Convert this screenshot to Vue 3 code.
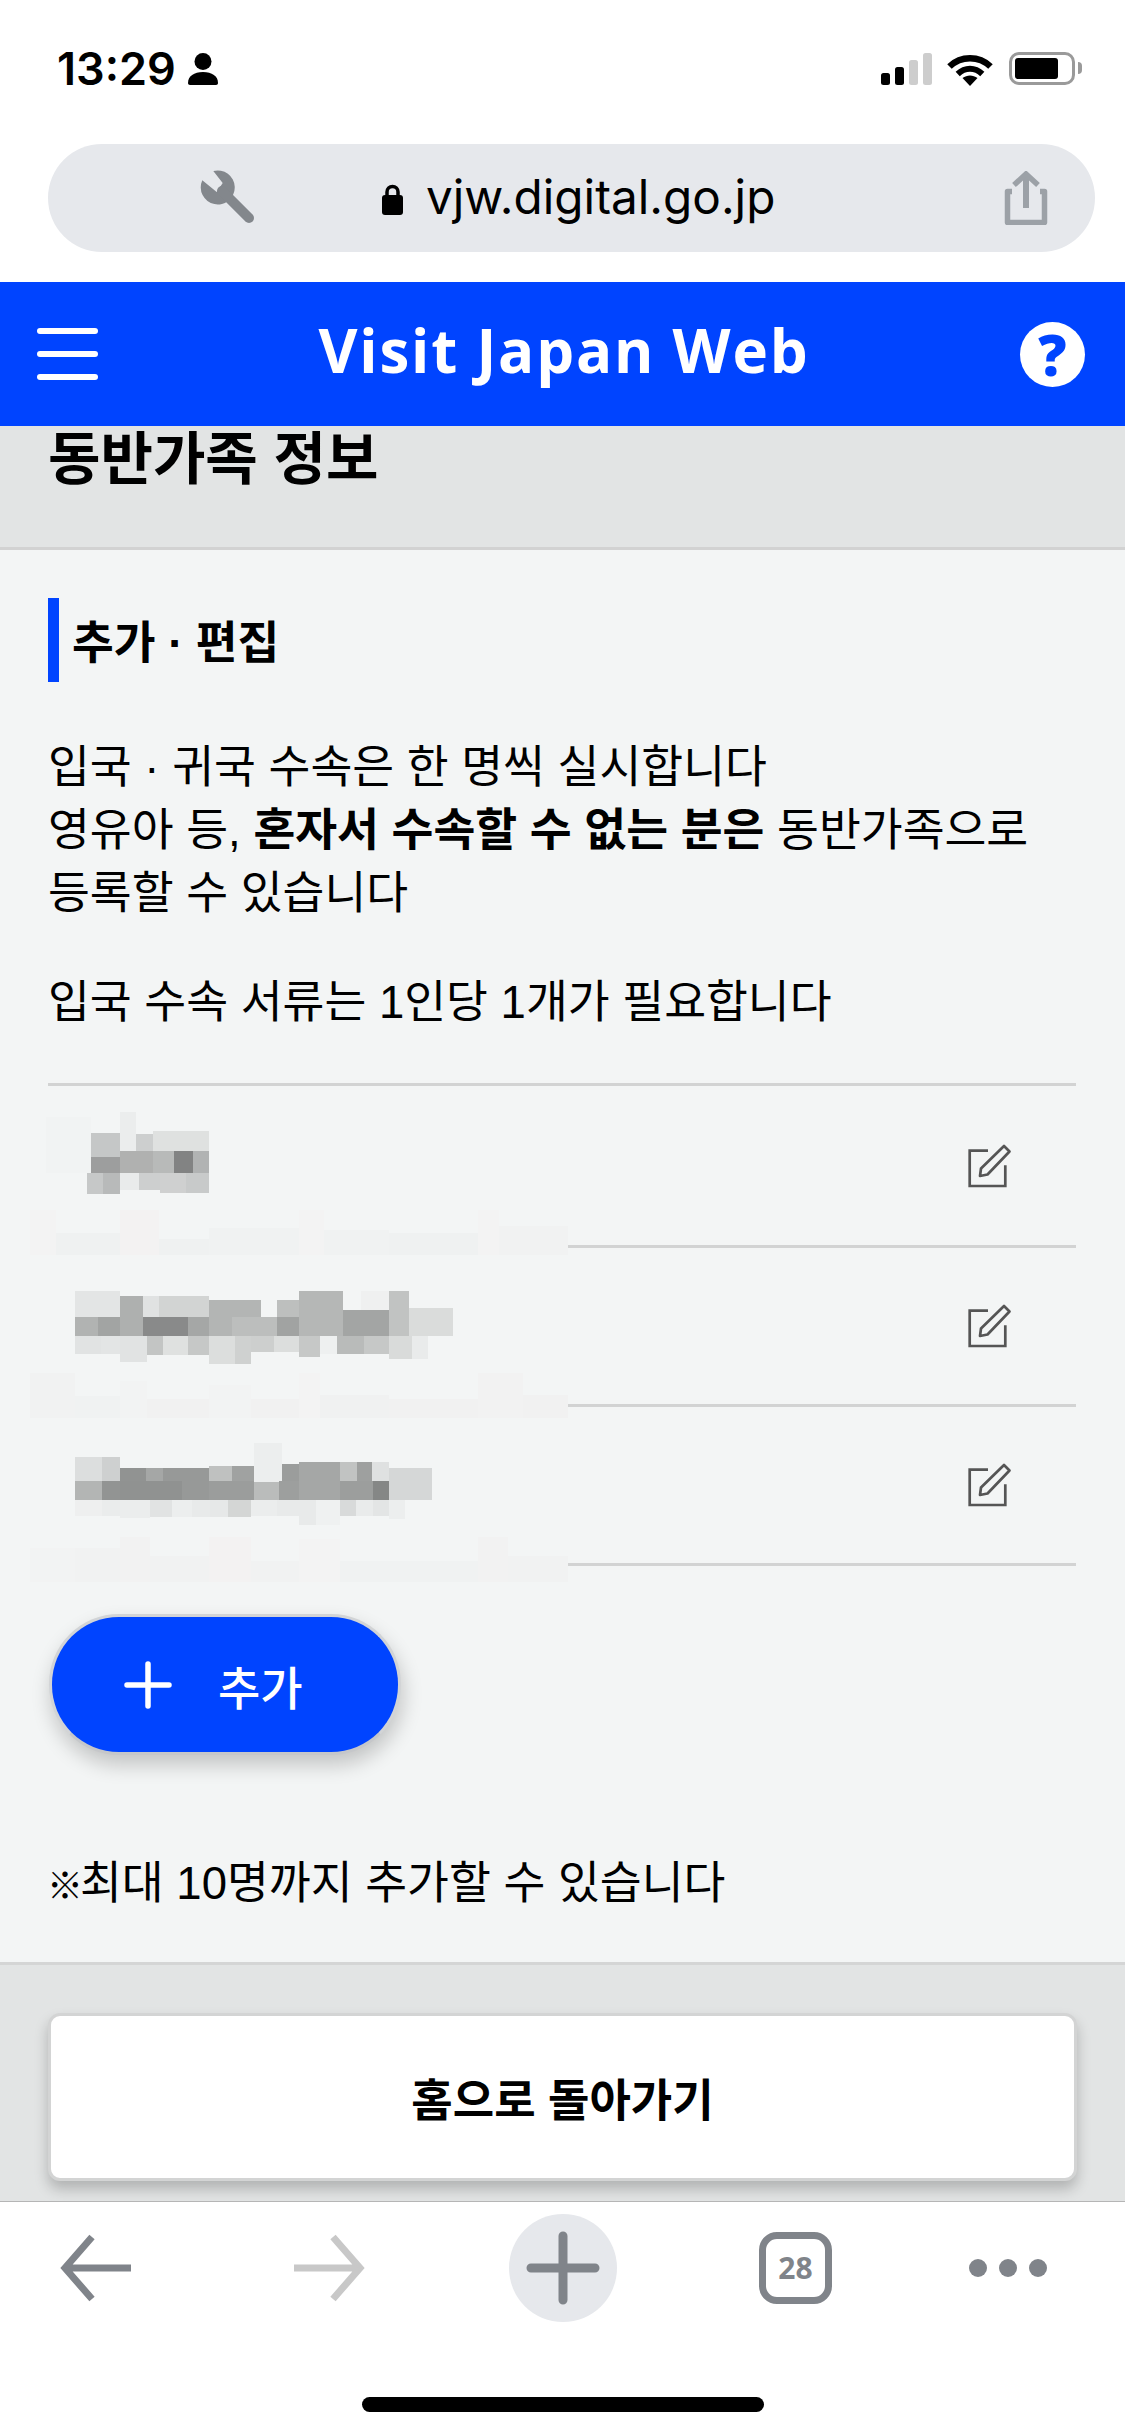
<template>
  <div class="phone">
    <div class="statusbar">
      <div class="status-left">
        <span class="time">13:29</span>
        <svg class="person" width="30" height="32" viewBox="0 0 30 32">
          <circle cx="15" cy="8.5" r="8.5" fill="#000" />
          <path d="M0 30c0-7 6-11 15-11s15 4 15 11c0 1.200-.8 2-2 2H2c-1.200 0-2-.8-2-2z" fill="#000" />
        </svg>
      </div>
      <div class="status-right">
        <div class="signal">
          <span v-for="bar in signalBars" :key="bar.h" class="sig-bar" :class="{ off: bar.off }" :style="{ height: bar.h + 'px' }"></span>
        </div>
        <svg class="wifi" width="46" height="34" viewBox="0 0 46 34">
          <path d="M2.500 14.500C14 3.500 32 3.500 43.500 14.500" fill="none" stroke="#000" stroke-width="6.500" />
          <path d="M10.700 22C18 15 28 15 35.300 22" fill="none" stroke="#000" stroke-width="6" />
          <path d="M15.500 26C20 22.500 26 22.500 30.500 26L23 34z" fill="#000" />
        </svg>
        <div class="battery">
          <div class="battery-fill"></div>
          <span class="battery-nub"></span>
        </div>
      </div>
    </div>

    <div class="urlrow">
      <div class="urlbar">
        <svg class="wrench" width="60" height="60" viewBox="200 160 60 60">
          <path d="M202.300 173.300L216.700 185L222.700 176L213.300 164A17 17 0 1 1 202.300 173.300z" fill="#83878c" />
          <path d="M222 184L249 211" stroke="#83878c" stroke-width="10" stroke-linecap="round" />
        </svg>
        <div class="address">
          <svg width="21" height="32" viewBox="0 0 21 32">
            <path d="M5 14V9a5.500 5.500 0 0 1 11 0v5" fill="none" stroke="#000" stroke-width="3.500" />
            <rect x="0" y="12" width="21" height="20" rx="3" fill="#000" />
          </svg>
          <span>vjw.digital.go.jp</span>
        </div>
        <svg class="share" width="44" height="54" viewBox="0 0 44 54">
          <path d="M8 20.500H3.500V51.500H40.500V20.500H36" fill="none" stroke="#9ca1a7" stroke-width="5.500" stroke-linejoin="round" />
          <path d="M22 4V37" stroke="#9ca1a7" stroke-width="6" />
          <path d="M10 14L22 3L34 14" fill="none" stroke="#9ca1a7" stroke-width="5.500" />
        </svg>
      </div>
    </div>

    <header class="app-header">
      <div class="hamburger">
        <span></span>
        <span></span>
        <span></span>
      </div>
      <div class="app-title">Visit Japan Web</div>
      <div class="help">?</div>
    </header>

    <div class="page-title">동반가족 정보</div>

    <main class="main">
      <h2 class="sub-title">추가 · 편집</h2>
      <p class="desc first">
        입국 · 귀국 수속은 한 명씩 실시합니다<br />
        영유아 등, <b>혼자서 수속할 수 없는 분은</b> 동반가족으로<br />
        등록할 수 있습니다
      </p>
      <p class="desc second">입국 수속 서류는 1인당 1개가 필요합니다</p>

      <div class="family-list">
        <div v-for="n in 3" :key="n" class="family-row">
          <svg class="edit" width="44" height="44" viewBox="0 0 44 44">
            <path d="M20 6.700H1.700V42H37.300V21.300" fill="none" stroke="#555" stroke-width="2.700" />
            <path d="M12 32L13 24.500L36 2L41.500 7.500L19.500 30.500z" fill="none" stroke="#555" stroke-width="2.700" stroke-linejoin="round" />
          </svg>
        </div>
        <!-- pixelated names, coords from a 1568x1568 grid over the region -->
        <svg class="mosaic" width="1125" height="560" viewBox="0 0 1568 1568" preserveAspectRatio="none" shape-rendering="crispEdges">
          <rect v-for="(r, i) in mosaic" :key="i" :x="r[0]" :y="r[2]" :width="r[1] - r[0]" :height="r[3] - r[2]" :fill="r[4]" />
        </svg>
      </div>

      <button class="add-btn">
        <svg width="48" height="48" viewBox="0 0 48 48">
          <path d="M3 24H45M24 3V45" stroke="#fff" stroke-width="5.500" stroke-linecap="round" />
        </svg>
        <span>추가</span>
      </button>

      <p class="desc note"><span class="mark">※</span>최대 10명까지 추가할 수 있습니다</p>
    </main>

    <div class="footer">
      <button class="home-btn">홈으로 돌아가기</button>
    </div>

    <nav class="toolbar">
      <div class="tool-icons">
        <svg class="tool-back" width="74" height="68" viewBox="0 0 74 68">
          <path d="M72 34H6M33 3L6 34L33 65" fill="none" stroke="#80848a" stroke-width="7" />
        </svg>
        <svg class="tool-forward" width="74" height="68" viewBox="0 0 74 68">
          <path d="M2 34H68M41 3L68 34L41 65" fill="none" stroke="#c8c8c8" stroke-width="7" />
        </svg>
        <div class="tool-new">
          <svg width="74" height="74" viewBox="0 0 74 74">
            <path d="M5 37H69M37 5V69" stroke="#80848a" stroke-width="9" stroke-linecap="round" />
          </svg>
        </div>
        <div class="tool-tabs">28</div>
        <div class="tool-more">
          <span></span>
          <span></span>
          <span></span>
        </div>
      </div>
      <div class="home-bar"></div>
    </nav>
  </div>
</template>

<script setup>
const signalBars = [
  { h: 12 },
  { h: 18 },
  { h: 25, off: true },
  { h: 32, off: true }
]

// x1, x2, y1, y2, colour
const mosaic = [
  // name 1
  [64, 127, 160, 315, '#f1f3f3'], [167, 190, 145, 255, '#ebeded'], [127, 167, 204, 272, '#c5c7c7'],
  [190, 213, 207, 255, '#cdcfcf'], [213, 291, 198, 255, '#dfe1e0'], [127, 167, 272, 316, '#9d9e9e'],
  [167, 213, 255, 316, '#b0b1b0'], [213, 243, 255, 316, '#b8bab9'], [243, 269, 255, 316, '#828383'],
  [269, 291, 255, 316, '#b1b3b3'], [121, 144, 316, 375, '#c6c8c8'], [144, 167, 316, 375, '#b8baba'],
  [167, 194, 316, 364, '#e9ebeb'], [194, 223, 316, 364, '#cdcfcf'], [223, 259, 316, 372, '#cfd0d0'],
  [259, 291, 316, 372, '#c8caca'],
  // sub line 1
  [42, 78, 420, 545, '#f3f3f3'], [78, 167, 485, 545, '#eff1f1'], [167, 222, 420, 545, '#f3f2f2'],
  [222, 291, 500, 545, '#eff1f1'], [291, 417, 470, 545, '#f0f2f2'], [417, 452, 420, 545, '#f3f3f3'],
  [452, 542, 475, 545, '#f0f2f2'], [542, 666, 485, 545, '#eff1f1'], [666, 695, 420, 545, '#f3f3f3'],
  [695, 792, 465, 545, '#f1f2f2'],
  // name 2
  [105, 167, 647, 720, '#e3e5e5'], [167, 199, 661, 720, '#aeb0af'], [199, 222, 661, 720, '#e0e2e2'],
  [222, 291, 661, 720, '#d2d4d3'], [291, 364, 672, 720, '#b3b5b4'], [386, 417, 672, 720, '#bdbfbe'],
  [417, 478, 647, 773, '#b5b7b6'], [503, 542, 647, 700, '#eff0f0'], [542, 570, 647, 773, '#c1c3c2'],
  [570, 631, 694, 773, '#dadcdb'], [105, 137, 720, 773, '#b1b3b2'], [137, 167, 720, 773, '#a2a4a3'],
  [167, 199, 720, 773, '#aeb0af'], [199, 262, 720, 773, '#898a8a'], [262, 291, 720, 773, '#a5a7a6'],
  [291, 323, 720, 773, '#b3b5b4'], [323, 386, 720, 773, '#bcbebd'], [386, 417, 720, 773, '#a1a3a2'],
  [478, 542, 700, 773, '#a3a5a4'], [105, 141, 773, 823, '#e1e3e3'], [141, 167, 773, 823, '#e3e5e5'],
  [167, 205, 773, 845, '#e1e3e3'], [205, 227, 773, 825, '#c3c5c4'], [227, 262, 773, 825, '#dfe1e0'],
  [262, 291, 773, 825, '#c6c8c7'], [291, 328, 773, 850, '#dcdedd'], [328, 350, 773, 850, '#cfd1d0'],
  [350, 382, 773, 818, '#cdcfce'], [382, 417, 773, 818, '#dcdedd'], [417, 446, 773, 832, '#c6c8c7'],
  [446, 470, 773, 822, '#eef0f0'], [470, 508, 773, 822, '#b9bbba'], [508, 542, 773, 822, '#c6c8c7'],
  [542, 574, 773, 836, '#d9dbda'], [574, 597, 773, 836, '#e9ebeb'],
  // sub line 2
  [42, 105, 877, 1001, '#f1f2f2'], [105, 167, 940, 1001, '#f0f2f2'], [167, 205, 898, 1001, '#f2f3f3'],
  [205, 291, 950, 1001, '#f1f1f1'], [291, 350, 910, 1001, '#f2f3f3'], [350, 417, 950, 1001, '#f1f1f1'],
  [417, 446, 877, 1001, '#f3f3f3'], [446, 542, 937, 1001, '#f0f1f1'], [542, 666, 950, 1001, '#f1f1f1'],
  [666, 729, 877, 1001, '#f2f2f2'], [729, 792, 937, 1001, '#f1f1f1'],
  // name 3
  [105, 142, 1112, 1179, '#dcdede'], [142, 167, 1112, 1179, '#ced0d0'], [167, 203, 1142, 1179, '#919392'],
  [203, 227, 1142, 1179, '#a5a7a6'], [227, 291, 1142, 1179, '#979998'], [291, 323, 1137, 1179, '#bfc1c0'],
  [323, 354, 1137, 1179, '#a0a2a1'], [354, 393, 1072, 1182, '#eceeee'], [393, 417, 1131, 1179, '#9b9d9c'],
  [417, 474, 1126, 1179, '#a5a7a6'], [474, 497, 1126, 1179, '#c1c3c2'], [497, 518, 1126, 1179, '#9ea09f'],
  [518, 542, 1126, 1179, '#dfe1e1'], [542, 602, 1142, 1232, '#d5d7d7'], [105, 142, 1179, 1232, '#b3b5b4'],
  [142, 167, 1179, 1232, '#929493'], [167, 254, 1179, 1232, '#909291'], [254, 291, 1179, 1232, '#979998'],
  [291, 354, 1179, 1232, '#9b9d9c'], [354, 389, 1182, 1232, '#babcbb'], [389, 417, 1179, 1232, '#9d9f9e'],
  [417, 474, 1179, 1232, '#a5a7a6'], [474, 520, 1179, 1232, '#9c9e9d'], [520, 542, 1179, 1232, '#858786'],
  [105, 142, 1232, 1277, '#eeefef'], [142, 167, 1232, 1277, '#eaecec'], [167, 209, 1232, 1282, '#ebeded'],
  [209, 240, 1232, 1280, '#e1e3e3'], [240, 268, 1232, 1280, '#eceeee'], [268, 292, 1232, 1280, '#e8eaea'],
  [292, 318, 1232, 1280, '#e6e8e8'], [318, 350, 1232, 1280, '#d4d6d5'], [350, 386, 1232, 1277, '#ebeded'],
  [386, 417, 1232, 1277, '#e8eaea'], [417, 440, 1232, 1302, '#e8eaea'], [440, 474, 1232, 1302, '#eff1f1'],
  [474, 496, 1232, 1277, '#d8dada'], [496, 520, 1232, 1277, '#e9ebeb'], [520, 542, 1232, 1277, '#e3e5e5'],
  [542, 564, 1232, 1284, '#eceeee'],
  // sub line 3
  [42, 105, 1365, 1462, '#f2f3f3'], [105, 167, 1365, 1462, '#f1f2f2'], [167, 209, 1335, 1462, '#f2f2f2'],
  [209, 291, 1388, 1462, '#f1f2f2'], [291, 350, 1335, 1462, '#f3f2f2'], [350, 417, 1402, 1462, '#f1f2f2'],
  [417, 474, 1340, 1462, '#f3f3f3'], [474, 666, 1402, 1462, '#f0f2f2'], [666, 708, 1335, 1462, '#f2f2f2'],
  [708, 792, 1388, 1462, '#f1f2f2']
]
</script>

<style scoped>
.phone {
  width: 1125px;
  height: 2436px;
  overflow: hidden;
  background: #fff;
  font-family: "Liberation Sans", "Noto Sans CJK KR", sans-serif;
  color: #000;
}

.statusbar {
  height: 144px;
  display: flex;
  justify-content: space-between;
  padding: 52px 50px 0 57px;
  box-sizing: border-box;
}

.status-left {
  display: flex;
  align-items: flex-start;
  height: 34px;
}

.time {
  font-family: Inter, sans-serif;
  font-weight: 600;
  font-size: 45px;
  line-height: 34px;
}

.person {
  margin-left: 12px;
  margin-top: 1px;
}

.status-right {
  display: flex;
  align-items: flex-start;
  height: 34px;
}

.signal {
  display: flex;
  align-items: flex-end;
  gap: 5px;
  height: 33px;
}

.sig-bar {
  width: 9px;
  border-radius: 2.500px;
  background: #000;
}

.sig-bar.off {
  background: #cdcdcd;
}

.wifi {
  margin-left: 15px;
}

.battery {
  position: relative;
  margin-left: 16px;
  width: 66px;
  height: 33px;
  box-sizing: border-box;
  border: 3px solid #9a9a9a;
  border-radius: 10px;
  padding: 3px;
}

.battery-fill {
  width: 43px;
  height: 21px;
  background: #000;
  border-radius: 3px;
}

.battery-nub {
  position: absolute;
  left: 66px;
  top: 7px;
  width: 4px;
  height: 12px;
  background: #9a9a9a;
  border-radius: 0 4px 4px 0;
}

.urlrow {
  height: 138px;
  padding: 0 30px 0 48px;
}

.urlbar {
  height: 108px;
  background: #e6e8ec;
  border-radius: 54px;
  display: flex;
  align-items: center;
}

.wrench {
  margin-left: 152px;
  margin-top: -2px;
}

.address {
  display: flex;
  align-items: center;
  gap: 23px;
  margin-left: 122px;
  margin-top: -2px;
  font-family: Inter, sans-serif;
  font-size: 47.700px;
}

.address svg {
  margin-top: 4px;
}

.share {
  margin-left: auto;
  margin-right: 47px;
}

.app-header {
  height: 144px;
  background: #0044ff;
  display: flex;
  align-items: center;
  justify-content: space-between;
  padding: 0 40px 0 37px;
  box-sizing: border-box;
}

.hamburger {
  width: 61px;
  display: flex;
  flex-direction: column;
  gap: 17px;
}

.hamburger span {
  height: 6px;
  background: #fff;
  border-radius: 3px;
}

.app-title {
  font-family: "Open Sans", sans-serif;
  font-weight: 700;
  font-size: 60px;
  line-height: 80px;
  letter-spacing: 1.800px;
  color: #fff;
  margin: -8px 0 0 10px;
}

.help {
  width: 65px;
  height: 65px;
  border-radius: 50%;
  background: #fff;
  color: #0044ff;
  font-family: "Open Sans", sans-serif;
  font-weight: 800;
  font-size: 56px;
  line-height: 65px;
  text-align: center;
}

.page-title {
  height: 124px;
  box-sizing: border-box;
  background: #e2e4e4;
  border-bottom: 3px solid #d2d2d2;
  padding-left: 48px;
  font-weight: 700;
  font-size: 57px;
  line-height: 66px;
}

.main {
  background: #f3f5f5;
  padding: 48px 49px 47px 48px;
  border-bottom: 3px solid #d4d5d5;
}

.sub-title {
  margin: 0;
  height: 84px;
  box-sizing: border-box;
  border-left: 11px solid #0044ff;
  padding-left: 13px;
  font-size: 45.400px;
  font-weight: 700;
  line-height: 92px;
}

.desc {
  margin: 0;
  font-size: 45.500px;
  line-height: 63px;
}

.desc.first {
  margin-top: 54px;
}

.desc.second {
  margin-top: 46px;
}

.family-list {
  position: relative;
  margin-top: 49px;
  border-top: 3px solid #d2d3d3;
}

.family-row {
  height: 156px;
  border-bottom: 3px solid #d2d3d3;
  display: flex;
  align-items: center;
  justify-content: flex-end;
  padding-right: 64px;
}

.family-row:first-child {
  height: 159px;
}

.mosaic {
  position: absolute;
  left: -48px;
  top: -26px;
}

.add-btn {
  display: flex;
  align-items: center;
  margin-top: 48px;
  margin-left: 1px;
  width: 352px;
  height: 141px;
  box-sizing: border-box;
  padding: 0 0 0 72px;
  background: #0044ff;
  border: 3px solid #d2d4d6;
  border-bottom-color: #c5c7ca;
  border-radius: 70px;
  box-shadow: 2px 10px 20px rgba(0, 0, 0, 0.2);
  color: #fff;
  font-family: inherit;
  font-size: 46px;
  font-weight: 500;
}

.add-btn span {
  margin-left: 46px;
}

.desc.note {
  margin-top: 97px;
}

.mark {
  display: inline-block;
  width: 33px;
  font-size: 36px;
  font-weight: 700;
  line-height: 0;
  margin-left: -1px;
}

.footer {
  height: 236px;
  box-sizing: border-box;
  background: #e2e4e4;
  padding: 48px 48px 0;
}

.home-btn {
  display: block;
  width: 100%;
  height: 168px;
  box-sizing: border-box;
  background: #fff;
  border: 3px solid #d3d4d4;
  border-radius: 12px;
  box-shadow: 0 8px 14px rgba(0, 0, 0, 0.22);
  font-family: inherit;
  font-size: 45px;
  font-weight: 700;
  color: #000;
}

.toolbar {
  position: relative;
  height: 235px;
  background: #fff;
  border-top: 1px solid #b5b5b5;
  box-sizing: border-box;
}

.tool-icons {
  display: flex;
  align-items: center;
  height: 108px;
  margin-top: 12px;
  padding-left: 59px;
}

.tool-forward {
  margin-left: 159px;
}

.tool-new {
  width: 108px;
  height: 108px;
  margin-left: 143px;
  border-radius: 50%;
  background: #e6e8ec;
  display: flex;
  align-items: center;
  justify-content: center;
}

.tool-tabs {
  width: 73px;
  height: 72px;
  box-sizing: border-box;
  margin-left: 142px;
  border: 7px solid #80848a;
  border-radius: 18px;
  color: #80848a;
  font-family: "Open Sans", sans-serif;
  font-weight: 700;
  font-size: 30px;
  line-height: 58px;
  text-align: center;
}

.tool-more {
  display: flex;
  gap: 12px;
  margin-left: 137px;
}

.tool-more span {
  width: 18px;
  height: 18px;
  border-radius: 50%;
  background: #80848a;
}

.home-bar {
  width: 402px;
  height: 15px;
  margin: 75px 0 0 362px;
  background: #000;
  border-radius: 8px;
}
</style>
